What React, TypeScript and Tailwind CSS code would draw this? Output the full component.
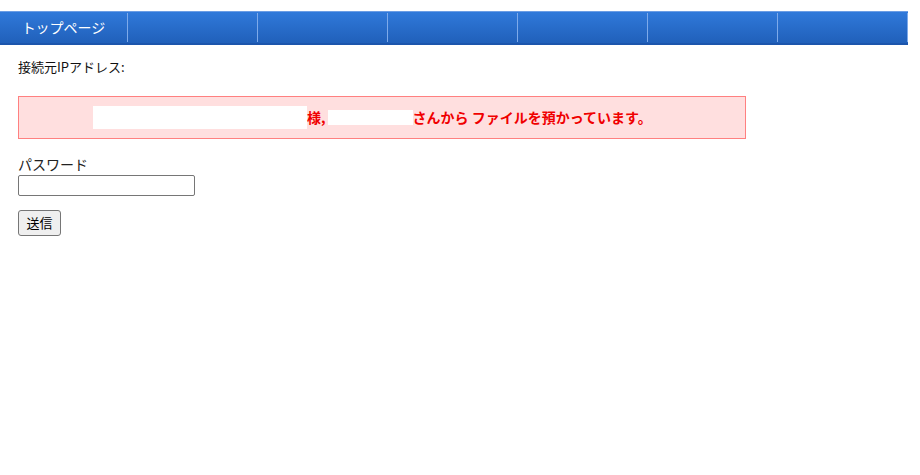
const font = { fontFamily: '"Noto Sans CJK JP", "Noto Sans", sans-serif' };

const NavItem = ({ label, first }: { label?: string; first?: boolean }) => (
	<div className={`flex items-center ${first ? 'w-[127px]' : 'w-[129px]'}`}>
		<div className="flex-1 text-center text-[14px] text-white">{label}</div>
	</div>
);

const Sep = () => <div className="w-px h-[29px] self-center bg-[#7eaaea]" />;

export default function App() {
	return (
		<div className="min-h-[475px] bg-white text-[#111]" style={font}>
			<div className="pt-[11px]">
				<div className="flex w-[908px] h-[34px] border-t border-t-[#6b9de4] border-b-2 border-b-[#1c55ac] bg-gradient-to-b from-[#3079da] to-[#2060ba]">
					<NavItem label="トップページ" first />
					<Sep />
					<NavItem />
					<Sep />
					<NavItem />
					<Sep />
					<NavItem />
					<Sep />
					<NavItem />
					<Sep />
					<NavItem />
					<Sep />
					<NavItem />
					<Sep />
				</div>
			</div>
			<div className="px-[18px]">
				<p className="mt-[12px] text-[13px] leading-[20px]">接続元IPアドレス:</p>
				<div className="mt-[19px] w-[728px] h-[43px] border border-[#ff8080] bg-[#ffdfdf] flex items-center pl-[74px] text-[14px] font-semibold text-[#f00000]">
					<span className="inline-block w-[214px] h-[23px] bg-white" />
					<span>様,</span>
					<span className="inline-block w-[85px] h-[15px] bg-white ml-[2px]" />
					<span>さんから ファイルを預かっています。</span>
				</div>
				<p className="mt-[14px] text-[14px] leading-[22px] text-[#222]">パスワード</p>
				<input
					type="password"
					className="block w-[177px] h-[21px] border border-[#767676] rounded-[2px] bg-white"
				/>
				<button className="mt-[14px] block w-[43px] h-[26px] border border-[#767676] rounded-[3px] bg-[#efefef] text-[13px] text-black">
					送信
				</button>
			</div>
		</div>
	);
}
